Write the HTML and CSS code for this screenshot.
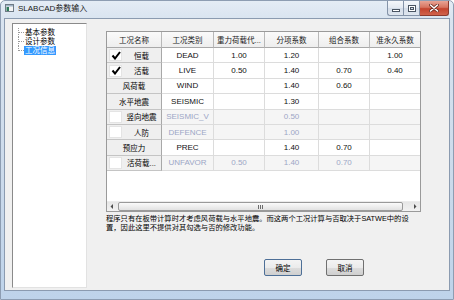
FILE: index.html
```html
<!DOCTYPE html>
<html lang="zh-CN">
<head>
<meta charset="utf-8">
<title>SLABCAD参数输入</title>
<link rel="stylesheet" href="styles.css">
</head>
<body>
<div class="window">
  <div class="titlebar">
    <svg class="app-icon" width="9" height="8" viewBox="0 0 9 8"><rect x="0.5" y="0.5" width="8" height="7" fill="#f4f4f4" stroke="#6f7b86"/><rect x="1" y="1" width="7" height="1.5" fill="#9fb2c6"/><rect x="1.5" y="3" width="2.5" height="4" fill="#2f7a5a"/></svg>
    <span class="title">SLABCAD参数输入</span>
    <div class="caption">
      <span class="cbtn cmin"><svg width="8" height="3" viewBox="0 0 8 3"><rect x="0.5" y="0.5" width="7" height="2" fill="#fff" stroke="#4a5563"/></svg></span>
      <span class="cbtn cmax"><svg width="8" height="7" viewBox="0 0 8 7"><rect x="0.5" y="0.5" width="7" height="6" fill="none" stroke="#4a5563"/><rect x="1.5" y="1.5" width="5" height="4" fill="none" stroke="#fff"/><rect x="2.5" y="2.5" width="3" height="2" fill="none" stroke="#4a5563"/></svg></span>
      <span class="cbtn cclose"><svg width="10" height="8" viewBox="0 0 10 8"><path d="M1.5 1 L8.5 7 M8.5 1 L1.5 7" stroke="#6b2a20" stroke-width="3" stroke-linecap="round"/><path d="M1.5 1 L8.5 7 M8.5 1 L1.5 7" stroke="#fff" stroke-width="1.6" stroke-linecap="round"/></svg></span>
    </div>
  </div>
  <div class="client">
    <div class="tree">
      <ul class="tree-list">
        <li class="node"><span class="conn"></span><span class="label">基本参数</span></li>
        <li class="node"><span class="conn"></span><span class="label">设计参数</span></li>
        <li class="node last"><span class="conn"></span><span class="label selected">工况信息</span></li>
      </ul>
    </div>
    <div class="main">
      <div class="grid-box">
        <div class="grid">
          <div class="hd">工况名称</div><div class="hd">工况类别</div><div class="hd">重力荷载代...</div><div class="hd">分项系数</div><div class="hd">组合系数</div><div class="hd last-col">准永久系数</div>

          <div class="rh"><span class="chk"><svg width="10" height="9" viewBox="0 0 10 9"><path d="M1.5 4.5 L4 7.5 L9 1" fill="none" stroke="#000" stroke-width="2"/></svg></span><span class="rl">恒载</span></div><div class="c">DEAD</div><div class="c">1.00</div><div class="c">1.20</div><div class="c"></div><div class="c last-col">1.00</div>

          <div class="rh"><span class="chk"><svg width="10" height="9" viewBox="0 0 10 9"><path d="M1.5 4.5 L4 7.5 L9 1" fill="none" stroke="#000" stroke-width="2"/></svg></span><span class="rl">活载</span></div><div class="c">LIVE</div><div class="c">0.50</div><div class="c">1.40</div><div class="c">0.70</div><div class="c last-col">0.40</div>

          <div class="rh"><span class="rl">风荷载</span></div><div class="c">WIND</div><div class="c"></div><div class="c">1.40</div><div class="c">0.60</div><div class="c last-col"></div>

          <div class="rh"><span class="rl">水平地震</span></div><div class="c">SEISMIC</div><div class="c"></div><div class="c">1.30</div><div class="c"></div><div class="c last-col"></div>

          <div class="rh"><span class="chk"></span><span class="rl">竖向地震</span></div><div class="c dis">SEISMIC_V</div><div class="c dis"></div><div class="c dis">0.50</div><div class="c dis"></div><div class="c dis last-col"></div>

          <div class="rh"><span class="chk"></span><span class="rl">人防</span></div><div class="c dis">DEFENCE</div><div class="c dis"></div><div class="c dis">1.00</div><div class="c dis"></div><div class="c dis last-col"></div>

          <div class="rh"><span class="rl">预应力</span></div><div class="c">PREC</div><div class="c"></div><div class="c">1.40</div><div class="c">0.70</div><div class="c last-col"></div>

          <div class="rh"><span class="chk"></span><span class="rl">活荷载...</span></div><div class="c dis">UNFAVOR</div><div class="c dis">0.50</div><div class="c dis">1.40</div><div class="c dis">0.70</div><div class="c dis last-col"></div>
        </div>
        <div class="filler"></div>
        <div class="hscroll">
          <span class="sbtn"><svg width="4" height="5" viewBox="0 0 4 5"><path d="M3 0 L0.5 2.5 L3 5 Z" fill="#4d4d4d"/></svg></span>
          <div class="track"><div class="thumb"><span class="grip"></span></div></div>
          <span class="sbtn"><svg width="4" height="5" viewBox="0 0 4 5"><path d="M1 0 L3.5 2.5 L1 5 Z" fill="#4d4d4d"/></svg></span>
        </div>
      </div>
      <p class="note">程序只有在板带计算时才考虑风荷载与水平地震。而这两个工况计算与否取决于SATWE中的设<br>置，因此这里不提供对其勾选与否的修改功能。</p>
      <div class="buttons">
        <button class="btn default">确定</button>
        <button class="btn">取消</button>
      </div>
    </div>
  </div>
</div>
</body>
</html>
```

FILE: styles.css
```css
* { box-sizing: border-box; }
html, body { margin: 0; padding: 0; }
body {
  width: 454px;
  height: 300px;
  overflow: hidden;
  font-family: "Liberation Sans", "Noto Sans CJK SC", sans-serif;
  color: #000;
}
.window {
  width: 454px;
  height: 300px;
  display: flex;
  flex-direction: column;
  background: linear-gradient(to bottom, #e4ecf5 0px, #d9e4f0 18px, #cbdaeb 60%, #bed3ea 100%);
  border: 1px solid #8d9db2;
  border-radius: 5px 5px 0 0;
}
.titlebar {
  height: 17px;
  display: flex;
  align-items: flex-start;
  padding: 0 4px 0 4px;
}
.app-icon { margin-top: 3px; flex: none; }
.title {
  margin-left: 4px;
  margin-top: 2px;
  font-size: 8px;
  line-height: 11px;
  color: #1a1a1a;
}
.caption {
  margin-left: auto;
  display: flex;
  height: 15px;
}
.cbtn {
  display: flex;
  align-items: center;
  justify-content: center;
  height: 15px;
  border: 1px solid #8493a8;
  border-top: none;
  background: linear-gradient(to bottom, #f4f7fb 0%, #e3e9f1 50%, #d3dce8 51%, #dfe6ef 100%);
}
.cmin { width: 16px; border-radius: 0 0 0 3px; border-right: none; padding-top: 5px; }
.cmax { width: 17px; }
.cclose {
  width: 29px;
  border-left: none;
  border-color: #8b3a2e;
  border-radius: 0 0 3px 0;
  background: linear-gradient(to bottom, #e8a495 0%, #d77460 45%, #c4442e 55%, #d0634c 100%);
}
.client {
  flex: 1;
  margin: 0 3px 8px 3px;
  border: 1px solid #8b9bb0;
  background: #f0f0f0;
  display: flex;
  align-items: flex-start;
  padding: 4px 0 0 7px;
}
.tree {
  width: 75px;
  height: 265px;
  flex: none;
  background: #fff;
  border: 1px solid;
  border-color: #8a8a8a #e2e2e2 #e2e2e2 #8a8a8a;
  padding-top: 4px;
}
.tree-list { list-style: none; margin: 0; padding: 0 0 0 5px; }
.node {
  display: flex;
  height: 9px;
  align-items: stretch;
}
.conn {
  width: 6px;
  height: 9px;
  border-left: 1px dotted #9a9a9a;
  background-image: linear-gradient(to right, #9a9a9a 50%, transparent 50%);
  background-size: 2px 1px;
  background-position: 0 4px;
  background-repeat: repeat-x;
}
.node.last .conn { height: 5px; }
.label {
  font-size: 7.5px;
  line-height: 9px;
  padding: 0 1px;
  white-space: nowrap;
}
.label.selected { background: #3399ff; color: #fff; }
.main {
  margin-left: 19px;
  margin-top: 8px;
  width: 315px;
  display: flex;
  flex-direction: column;
}
.grid-box {
  height: 181px;
  border: 1px solid #9a9a9a;
  background: #fff;
  display: flex;
  flex-direction: column;
}
.grid {
  display: grid;
  grid-template-columns: 55px 52px 51px 54px 51px 50px;
  grid-template-rows: 16px repeat(8, 15.4px);
  font-size: 7.5px;
}
.hd, .c, .rh {
  display: flex;
  align-items: center;
  justify-content: center;
  white-space: nowrap;
  overflow: hidden;
}
.hd {
  background: linear-gradient(to bottom, #fafafa, #eeeeee);
  border-right: 1px solid #b8b8b8;
  border-bottom: 1px solid #a8a8a8;
  color: #1a1a1a;
}
.rh {
  background: #efefef;
  border-right: 1px solid #a8a8a8;
  border-bottom: 1px solid #c4c4c4;
  justify-content: flex-start;
}
.rh .rl { flex: 1; text-align: center; }
.chk {
  width: 13px;
  height: 12px;
  margin-left: 2px;
  background: #fff;
  border: 1px solid #e4e4e4;
  display: flex;
  align-items: center;
  justify-content: center;
  flex: none;
}
.c {
  border-right: 1px solid #dcdcdc;
  border-bottom: 1px solid #dcdcdc;
  font-size: 8px;
  color: #111;
}
.c.dis { color: #9ca6c6; background: #f5f5f5; }
.last-col { border-right: none; }
.filler { flex: 1; }
.hscroll {
  height: 10px;
  display: flex;
  background: linear-gradient(to bottom, #e6e6e6, #f2f2f2);
  border-top: 1px solid #ececec;
}
.sbtn {
  width: 10px;
  display: flex;
  align-items: center;
  justify-content: center;
  flex: none;
}
.track { flex: 1; display: flex; padding: 0 7px 0 1px; }
.thumb {
  flex: 1;
  border: 1px solid #9a9a9a;
  border-radius: 2px;
  background: linear-gradient(to bottom, #fbfbfb, #e2e2e2);
  display: flex;
  align-items: center;
  justify-content: center;
}
.grip {
  width: 5px;
  height: 4px;
  background-image: linear-gradient(to right, #6d6d6d 1px, transparent 1px);
  background-size: 2px 4px;
}
.note {
  margin: 2px 0 0 0;
  font-size: 7.3px;
  line-height: 9px;
  white-space: nowrap;
}
.buttons {
  margin-top: 27px;
  padding-left: 158px;
  display: flex;
  gap: 24px;
}
.btn {
  width: 38px;
  height: 17px;
  padding: 0;
  font-family: "Liberation Sans", "Noto Sans CJK SC", sans-serif;
  font-size: 7.5px;
  color: #000;
  border: 1px solid #707070;
  border-radius: 2px;
  background: linear-gradient(to bottom, #f4f4f4 0%, #ebebeb 50%, #dddddd 51%, #cfcfcf 100%);
}
.btn.default { border-color: #4d6f97; }
```
